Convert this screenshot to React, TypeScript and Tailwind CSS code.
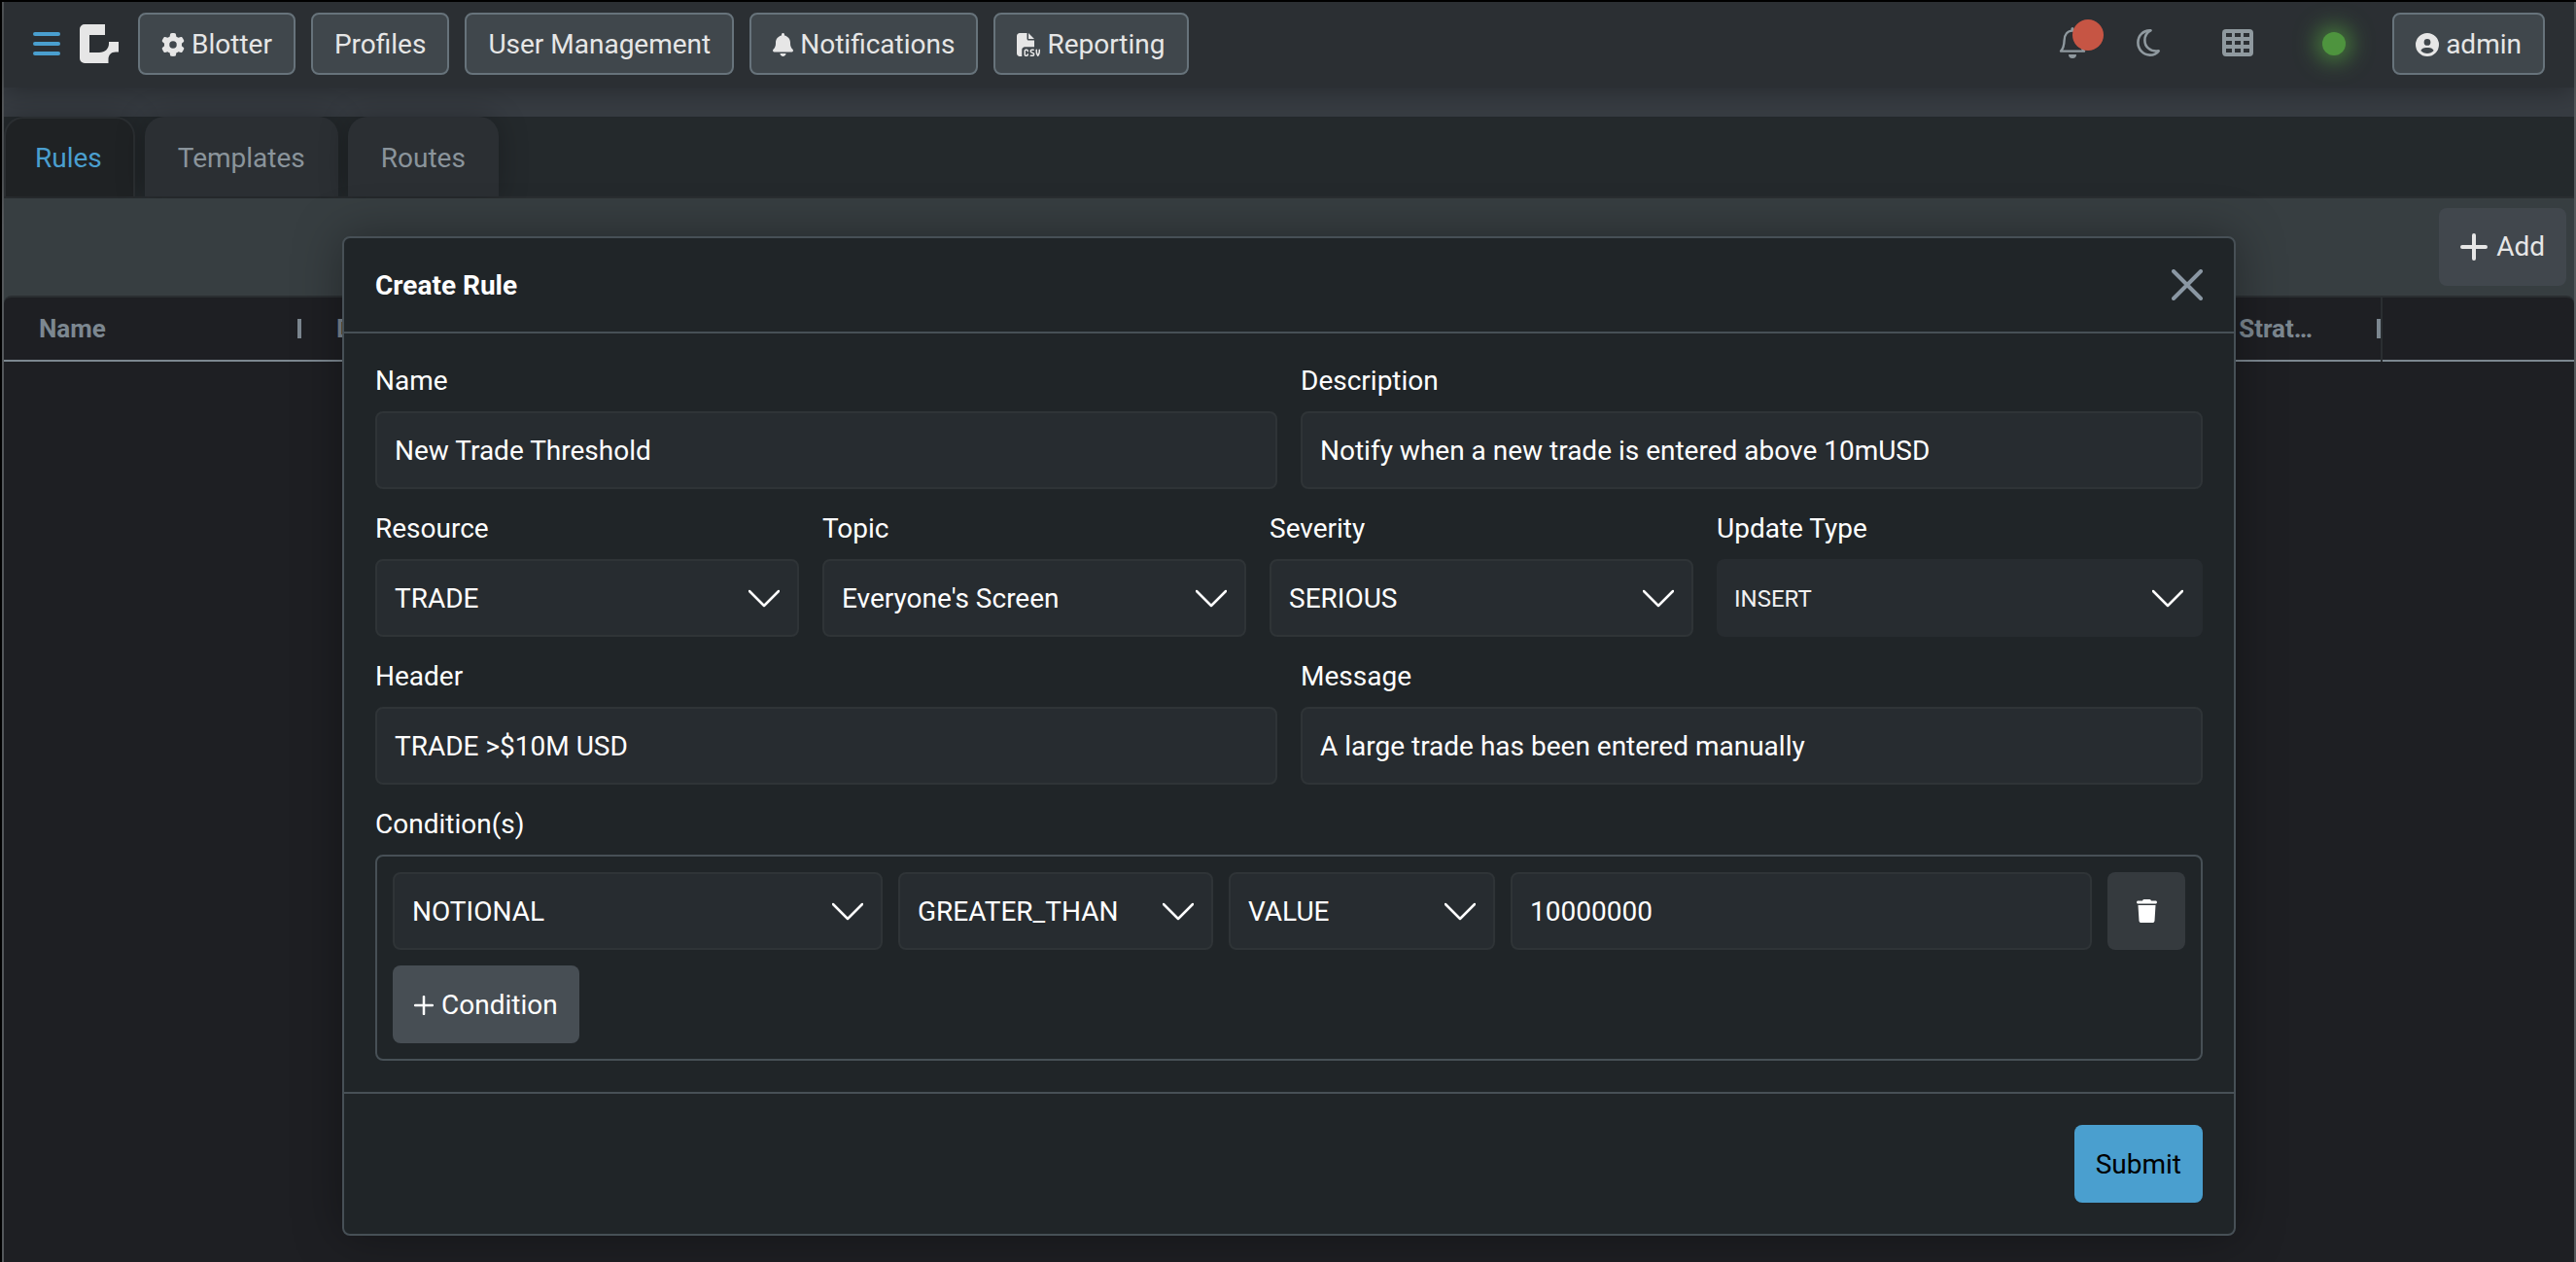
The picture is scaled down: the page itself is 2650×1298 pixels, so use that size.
import React from 'react';
import { FaGear, FaBell, FaFileCsv, FaCircleUser, FaTrash } from 'react-icons/fa6';

const navButton =
  'flex h-16 items-center gap-[7px] rounded-lg border-2 border-[#67737b] bg-[#40474c] px-[22px] pt-[2px] text-[28px] leading-8 text-[#e6e6e6]';
const field =
  'h-20 w-full rounded-lg border-2 border-[#2f3437] bg-[#272c30] text-[28px] leading-8 text-white outline-none';

function Logo() {
  return (
    <svg viewBox="0 0 40 40" className="h-10 w-10" fill="#e6e6e6" aria-hidden="true">
      <path d="M5 0H26V11H10V29H20C26 29 30 25 30 20V18H40V28.5H37C32 28.5 29.5 32 29.5 36V40H5A5 5 0 0 1 0 35V5A5 5 0 0 1 5 0Z" />
    </svg>
  );
}

function BellIcon() {
  return (
    <svg viewBox="0 0 28 32" className="h-8 w-7" aria-hidden="true">
      <path
        d="M2 24.6C5 21.5 5.4 18 5.6 13.5C5.8 7.5 9 3.6 14 3.6C19 3.6 22.2 7.5 22.4 13.5C22.6 18 23 21.5 26 24.6Z"
        fill="none"
        stroke="#8f999f"
        strokeWidth="2.4"
        strokeLinejoin="round"
      />
      <rect x="12.5" y="0" width="3" height="4" rx="1.5" fill="#8f999f" />
      <path d="M10 28H18A4 4 0 0 1 10 28Z" fill="#8f999f" />
    </svg>
  );
}

function MoonIcon() {
  return (
    <svg viewBox="0 0 24 28" className="h-7 w-6" fill="none" stroke="#8f999f" strokeWidth="2.6" strokeLinejoin="round" aria-hidden="true">
      <path d="M14.5 1.4C7 0.8 1.4 6.5 1.4 13.8C1.4 21 7 26.6 13.6 26.6C17.5 26.6 20.8 25 22.6 22.4C13.5 23.6 8.4 17.5 8.4 11.4C8.4 6.8 11 3.2 14.5 1.4Z" />
    </svg>
  );
}

function GridIcon() {
  const cells = [0, 1, 2];
  return (
    <svg viewBox="0 0 32 28" className="h-7 w-8" aria-hidden="true">
      <rect width="32" height="28" rx="4" fill="#8f999f" />
      {cells.map((r) =>
        cells.map((c) => (
          <rect key={`${r}-${c}`} x={4 + c * 9} y={4 + r * 8} width="6" height="4" fill="#2b2f33" />
        )),
      )}
    </svg>
  );
}

function Chevron() {
  return (
    <svg
      viewBox="0 0 32 32"
      className="pointer-events-none absolute right-5 top-6 h-8 w-8"
      fill="none"
      stroke="white"
      strokeWidth="2.5"
      strokeLinecap="round"
      strokeLinejoin="round"
      aria-hidden="true"
    >
      <path d="M1 9L16 24L31 9" />
    </svg>
  );
}

function TextField({ id, label, value }: { id: string; label: string; value: string }) {
  return (
    <div>
      <label htmlFor={id} className="mb-[6px] block leading-[50px]">
        {label}
      </label>
      <input id={id} defaultValue={value} className={`${field} px-[18px]`} />
    </div>
  );
}

function Dropdown({
  id,
  label,
  value,
  hideLabel = false,
  small = false,
}: {
  id: string;
  label: string;
  value: string;
  hideLabel?: boolean;
  small?: boolean;
}) {
  return (
    <div>
      {!hideLabel && (
        <label htmlFor={id} className="mb-[6px] block leading-[50px]">
          {label}
        </label>
      )}
      <div className="relative">
        <select
          id={id}
          aria-label={hideLabel ? label : undefined}
          className={
            small
              ? 'h-20 w-full appearance-none rounded-lg bg-[#272c30] px-[18px] pt-[2px] text-2xl leading-8 text-[#f0f0f0] outline-none'
              : `${field} appearance-none px-[18px] pt-[2px]`
          }
        >
          <option>{value}</option>
        </select>
        <Chevron />
      </div>
    </div>
  );
}

function NavBar() {
  return (
    <nav className="relative z-10 flex h-[88px] items-center bg-[#2b2f33] px-[30px] pb-[2px] shadow-[0_4px_24px_rgba(0,0,0,0.3)]">
      <button aria-label="Menu" className="flex w-7 flex-col gap-[6px]">
        <span className="h-1 rounded-full bg-[#4a9fcf]" />
        <span className="h-1 rounded-full bg-[#4a9fcf]" />
        <span className="h-1 rounded-full bg-[#4a9fcf]" />
      </button>
      <div className="ml-5">
        <Logo />
      </div>
      <div className="ml-5 flex gap-4">
        <button className={navButton}>
          <FaGear className="size-6" />
          Blotter
        </button>
        <button className={navButton}>Profiles</button>
        <button className={navButton}>User Management</button>
        <button className={navButton}>
          <FaBell className="h-6 w-[21px]" />
          Notifications
        </button>
        <button className={navButton}>
          <FaFileCsv className="size-6" />
          Reporting
        </button>
      </div>
      <div className="ml-auto flex items-center">
        <div className="mr-[71px] flex items-center pb-[2px]">
          <button aria-label="Alerts" className="relative mr-[52px]">
            <BellIcon />
            <span className="absolute -top-2 left-[14px] size-8 rounded-full bg-[#c65544]" />
          </button>
          <button aria-label="Dark mode" className="mr-16">
            <MoonIcon />
          </button>
          <button aria-label="Layout">
            <GridIcon />
          </button>
        </div>
        <span className="mr-12 size-6 rounded-full bg-[#4e943e] shadow-[0_0_24px_4px_#4e943e]" />
        <button className={navButton}>
          <FaCircleUser className="size-6" />
          admin
        </button>
      </div>
    </nav>
  );
}

function TabBar() {
  return (
    <div className="bg-[#373c42] pt-[30px]">
      <div role="tablist" className="flex h-[84px] gap-[10px] border-b-2 border-[#2a2e31] bg-[#24292c]">
        <button
          role="tab"
          aria-selected="true"
          className="rounded-t-[20px] border-2 border-b-0 border-[#2a2e31] bg-[#1f2224] pl-[30px] pr-8 pt-[2px] text-[#4a9fcf] shadow-[0_0_30px_rgba(0,0,0,0.25)]"
        >
          Rules
        </button>
        <button
          role="tab"
          aria-selected="false"
          className="rounded-t-[20px] bg-[#2b2f33] px-[34px] pt-1 text-[#8a949b] shadow-[0_0_30px_rgba(0,0,0,0.25)]"
        >
          Templates
        </button>
        <button
          role="tab"
          aria-selected="false"
          className="rounded-t-[20px] bg-[#2b2f33] px-[34px] pt-1 text-[#8a949b] shadow-[0_0_30px_rgba(0,0,0,0.25)]"
        >
          Routes
        </button>
      </div>
    </div>
  );
}

const columns = ['Name', 'Description', 'Resource', 'Topic', 'Severity', 'Header', 'Message', 'Execution Strat…'];

function RulesGrid() {
  return (
    <div className="flex-1 rounded-t-lg border-t-2 border-[#2a2e31] bg-[#1e1f23]">
      <table className="w-full table-fixed">
        <thead>
          <tr className="h-[65px] border-b-2 border-[#7c8790]">
            {columns.map((name, i) => (
              <th
                key={name}
                className={
                  i === columns.length - 1
                    ? 'w-[304px] border-r-2 border-[#2a2e31] p-0 pl-9'
                    : 'w-[306px] p-0 pl-9'
                }
              >
                <div className="flex items-center justify-between text-[26px] font-bold leading-8 text-[#7c8790]">
                  <span className="truncate">{name}</span>
                  <span className="h-5 w-1 bg-[#7c8790]" />
                </div>
              </th>
            ))}
            <th />
          </tr>
        </thead>
      </table>
    </div>
  );
}

function CreateRuleDialog() {
  return (
    <div className="absolute inset-x-0 top-[243px] z-20 pl-[352px] pr-[350px]">
      <form
        role="dialog"
        aria-labelledby="dialog-title"
        onSubmit={(e) => e.preventDefault()}
        className="rounded-lg border-2 border-[#475056] bg-[#202528] text-white shadow-[0_0_50px_rgba(0,0,0,0.35)]"
      >
        <header className="flex h-[98px] items-center justify-between border-b-2 border-[#475056] px-8">
          <h2 id="dialog-title" className="pt-[2px] font-bold">
            Create Rule
          </h2>
          <button type="button" aria-label="Close">
            <svg viewBox="0 0 32 32" className="size-8" stroke="#8a97a3" strokeWidth="4" strokeLinecap="round" aria-hidden="true">
              <path d="M2 2L30 30M30 2L2 30" />
            </svg>
          </button>
        </header>
        <div className="flex flex-col gap-4 px-8 pb-8 pt-6">
          <div className="grid grid-cols-2 gap-6">
            <TextField id="name" label="Name" value="New Trade Threshold" />
            <TextField id="description" label="Description" value="Notify when a new trade is entered above 10mUSD" />
          </div>
          <div className="grid grid-cols-[1fr_1fr_1fr_500px] gap-6">
            <Dropdown id="resource" label="Resource" value="TRADE" />
            <Dropdown id="topic" label="Topic" value="Everyone's Screen" />
            <Dropdown id="severity" label="Severity" value="SERIOUS" />
            <Dropdown id="update-type" label="Update Type" value="INSERT" small />
          </div>
          <div className="grid grid-cols-2 gap-6">
            <TextField id="header" label="Header" value="TRADE >$10M USD" />
            <TextField id="message" label="Message" value="A large trade has been entered manually" />
          </div>
          <fieldset>
            <legend className="mb-[6px] leading-[50px]">Condition(s)</legend>
            <div className="flex flex-col items-start gap-4 rounded-lg border-2 border-[#475056] p-4">
              <div className="grid w-full grid-cols-[504fr_324fr_274fr_598fr_80px] gap-4">
                <Dropdown id="cond-field" label="Field" value="NOTIONAL" hideLabel />
                <Dropdown id="cond-op" label="Operator" value="GREATER_THAN" hideLabel />
                <Dropdown id="cond-kind" label="Compare with" value="VALUE" hideLabel />
                <input aria-label="Value" defaultValue="10000000" className={`${field} px-[18px]`} />
                <button
                  type="button"
                  aria-label="Delete condition"
                  className="flex h-20 items-center justify-center rounded-lg bg-[#353a3e]"
                >
                  <FaTrash className="h-6 w-[21px]" />
                </button>
              </div>
              <button type="button" className="flex h-20 items-center gap-2 rounded-lg bg-[#474e54] px-[22px] pt-[2px]">
                <svg viewBox="0 0 20 20" className="size-5" stroke="white" strokeWidth="2.5" strokeLinecap="round" aria-hidden="true">
                  <path d="M1 10H19M10 1V19" />
                </svg>
                Condition
              </button>
            </div>
          </fieldset>
        </div>
        <footer className="flex justify-end border-t-2 border-[#475056] p-8">
          <button type="submit" className="h-20 rounded-lg bg-[#4a9fcf] px-[22px] pt-[2px] text-black">
            Submit
          </button>
        </footer>
      </form>
    </div>
  );
}

export default function App() {
  return (
    <div className="relative flex min-h-screen flex-col bg-black pl-[2px] pt-[2px] font-['Roboto',sans-serif] text-[28px] leading-8">
      <div className="flex flex-1 flex-col border-x-2 border-[#54585b] bg-[#373e41]">
        <NavBar />
        <TabBar />
        <div className="flex justify-end bg-[#373e41] px-2 py-[10px]">
          <button className="flex h-20 items-center gap-[9px] rounded-lg bg-[#41474d] px-[22px] text-[#e6e6e6]">
            <svg viewBox="0 0 28 28" className="size-7" stroke="#e6e6e6" strokeWidth="4" strokeLinecap="round" aria-hidden="true">
              <path d="M2 14H26M14 2V26" />
            </svg>
            Add
          </button>
        </div>
        <RulesGrid />
      </div>
      <CreateRuleDialog />
    </div>
  );
}
